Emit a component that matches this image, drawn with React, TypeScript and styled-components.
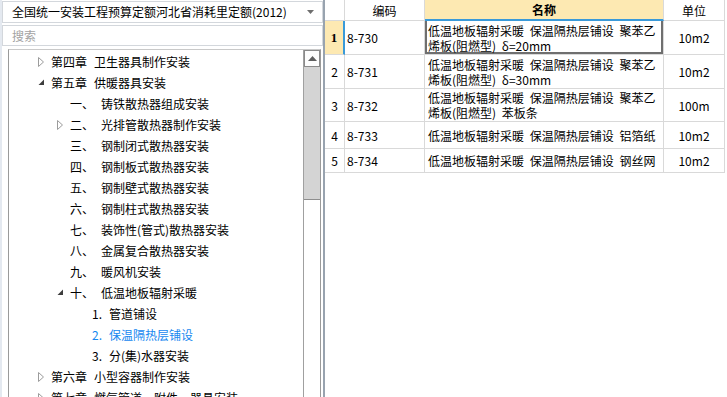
import styled, { createGlobalStyle } from "styled-components";

const GlobalStyle = createGlobalStyle`
  html, body {
    margin: 0;
    padding: 0;
    background: #fff;
    overflow: hidden;
  }
  body {
    font-family: "Noto Sans CJK SC", "Liberation Sans", sans-serif;
    font-size: 12px;
    color: #000;
  }
  * {
    box-sizing: border-box;
  }
`;

const Window = styled.div`
  display: flex;
  width: 727px;
  height: 397px;
  overflow: hidden;
  background: #fff;
`;

const LeftPane = styled.div`
  width: 323px;
  flex-shrink: 0;
  display: flex;
  flex-direction: column;
  padding: 1px 0 0 0;
  border-left: 2px solid #e4e9f0;
  overflow: hidden;
`;

const Combo = styled.div`
  height: 22px;
  flex-shrink: 0;
  display: flex;
  align-items: center;
  justify-content: space-between;
  padding: 0 8px 0 9px;
  border: 1px solid #d3d7dc;
  background: #fff;
  white-space: nowrap;
  line-height: 20px;
`;

const SearchBox = styled.div`
  height: 21px;
  flex-shrink: 0;
  margin-top: 2px;
  display: flex;
  align-items: center;
  padding-left: 9px;
  border: 1px solid #d3d7dc;
  color: #a3a3a3;
  background: #fff;
`;

const TreeBox = styled.div`
  height: 360px;
  flex-shrink: 0;
  margin: 3px 2px 0 6px;
  display: flex;
  border: 1px solid #9a9a9a;
  border-bottom: none;
  border-top-color: #c9c9c9;
  background: #fff;
`;

const TreeList = styled.div`
  flex: 1;
  padding-top: 1px;
  overflow: hidden;
`;

const TreeRow = styled.div<{ $pad: number; $selected?: boolean }>`
  height: 21px;
  display: flex;
  align-items: center;
  padding-left: ${(p) => p.$pad}px;
  white-space: nowrap;
  line-height: 21px;
  color: ${(p) => (p.$selected ? "#1688f0" : "#000")};
`;

const ToggleSlot = styled.span`
  width: 13px;
  flex-shrink: 0;
  display: flex;
  align-items: center;
`;

const Tag = styled.span<{ $w: number }>`
  width: ${(p) => p.$w}px;
  flex-shrink: 0;
`;

const ScrollBar = styled.div`
  width: 17px;
  flex-shrink: 0;
  display: flex;
  flex-direction: column;
  border-left: 1px solid #a0a0a0;
  background: #fff;
`;

const UpButton = styled.div`
  height: 17px;
  display: flex;
  align-items: center;
  justify-content: center;
  border: 1px solid #8a8a8a;
  background: #fdfdfd;
`;

const Thumb = styled.div`
  height: 133px;
  background: #d4d4d4;
  border-bottom: 1px solid #8e8e8e;
`;

const RightPane = styled.div`
  flex: 1;
  border-left: 2px solid #98a3af;
  background: #fff;
`;

const GridRow = styled.div<{ $h: number }>`
  display: grid;
  grid-template-columns: 20px 80px 239px 61px;
  width: 400px;
  height: ${(p) => p.$h}px;
`;

const Cell = styled.div<{ $align?: "left" | "center" }>`
  display: flex;
  align-items: center;
  justify-content: ${(p) => (p.$align === "left" ? "flex-start" : "center")};
  padding: 0 2px;
  border-right: 1px solid #d9d9d9;
  border-bottom: 1px solid #d9d9d9;
  white-space: nowrap;
  overflow: hidden;
`;

const HeadCell = styled(Cell)<{ $active?: boolean }>`
  background: ${(p) => (p.$active ? "#fde9b2" : "#fff")};
  font-weight: ${(p) => (p.$active ? 700 : 400)};
  border-bottom: ${(p) => (p.$active ? "2px solid #3a9ad9" : "1px solid #d9d9d9")};
`;

const NumCell = styled(Cell)<{ $active?: boolean }>`
  background: ${(p) => (p.$active ? "#fde9b2" : "#fff")};
  font-family: ${(p) => (p.$active ? '"Liberation Serif", serif' : "inherit")};
  font-weight: ${(p) => (p.$active ? 700 : 400)};
  font-size: ${(p) => (p.$active ? "13px" : "12px")};
  border-right: ${(p) => (p.$active ? "2px solid #3a9ad9" : "1px solid #d9d9d9")};
`;

const NameCell = styled(Cell)<{ $active?: boolean }>`
  justify-content: flex-start;
  padding-left: 3px;
  box-shadow: ${(p) =>
    p.$active ? "inset 2px 0 #6f6f6f, inset -2px 0 #6f6f6f, inset 0 -2px #6f6f6f" : "none"};
`;

const NameText = styled.span`
  display: block;
  width: 100%;
  white-space: normal;
  line-height: 15px;
  word-spacing: 3px;
`;

type Toggle = "none" | "closed" | "open";

interface TreeNode {
  level: 1 | 2 | 3;
  toggle: Toggle;
  tag: string;
  title: string;
  selected?: boolean;
}

const treeNodes: TreeNode[] = [
  { level: 1, toggle: "closed", tag: "第四章", title: "卫生器具制作安装" },
  { level: 1, toggle: "open", tag: "第五章", title: "供暖器具安装" },
  { level: 2, toggle: "none", tag: "一、", title: "铸铁散热器组成安装" },
  { level: 2, toggle: "closed", tag: "二、", title: "光排管散热器制作安装" },
  { level: 2, toggle: "none", tag: "三、", title: "钢制闭式散热器安装" },
  { level: 2, toggle: "none", tag: "四、", title: "钢制板式散热器安装" },
  { level: 2, toggle: "none", tag: "五、", title: "钢制壁式散热器安装" },
  { level: 2, toggle: "none", tag: "六、", title: "钢制柱式散热器安装" },
  { level: 2, toggle: "none", tag: "七、", title: "装饰性(管式)散热器安装" },
  { level: 2, toggle: "none", tag: "八、", title: "金属复合散热器安装" },
  { level: 2, toggle: "none", tag: "九、", title: "暖风机安装" },
  { level: 2, toggle: "open", tag: "十、", title: "低温地板辐射采暖" },
  { level: 3, toggle: "none", tag: "1.", title: "管道铺设" },
  { level: 3, toggle: "none", tag: "2.", title: "保温隔热层铺设", selected: true },
  { level: 3, toggle: "none", tag: "3.", title: "分(集)水器安装" },
  { level: 1, toggle: "closed", tag: "第六章", title: "小型容器制作安装" },
  { level: 1, toggle: "closed", tag: "第七章", title: "燃气管道、附件、器具安装" },
];

const levelPad = { 1: 29, 2: 48, 3: 70 };
const levelTag = { 1: 43, 2: 31, 3: 17 };

interface Quota {
  no: number;
  code: string;
  name: string;
  unit: string;
  h: number;
}

const quotas: Quota[] = [
  { no: 1, code: "8-730", name: "低温地板辐射采暖 保温隔热层铺设 聚苯乙烯板(阻燃型) δ=20mm", unit: "10m2", h: 34 },
  { no: 2, code: "8-731", name: "低温地板辐射采暖 保温隔热层铺设 聚苯乙烯板(阻燃型) δ=30mm", unit: "10m2", h: 34 },
  { no: 3, code: "8-732", name: "低温地板辐射采暖 保温隔热层铺设 聚苯乙烯板(阻燃型) 苯板条", unit: "100m", h: 33 },
  { no: 4, code: "8-733", name: "低温地板辐射采暖 保温隔热层铺设 铝箔纸", unit: "10m2", h: 27 },
  { no: 5, code: "8-734", name: "低温地板辐射采暖 保温隔热层铺设 钢丝网", unit: "10m2", h: 24 },
];

function ToggleIcon({ kind }: { kind: Toggle }) {
  if (kind === "closed") {
    return (
      <svg width="7" height="10" viewBox="0 0 7 10">
        <polygon points="0.5,0.5 5.5,5 0.5,9.5" fill="#fff" stroke="#9c9c9c" strokeWidth="1" />
      </svg>
    );
  }
  if (kind === "open") {
    return (
      <svg width="7" height="7" viewBox="0 0 7 7">
        <polygon points="6,0.5 6,6 0.5,6" fill="#3d3d3d" />
      </svg>
    );
  }
  return null;
}

function App() {
  const selectedRow = 1;
  return (
    <>
      <GlobalStyle />
      <Window>
        <LeftPane>
          <Combo>
            <span>全国统一安装工程预算定额河北省消耗里定额(2012)</span>
            <svg width="7" height="4" viewBox="0 0 7 4">
              <polygon points="0,0 7,0 3.5,4" fill="#6e6e6e" />
            </svg>
          </Combo>
          <SearchBox>搜索</SearchBox>
          <TreeBox>
            <TreeList>
              {treeNodes.map((n) => (
                <TreeRow key={n.tag + n.title} $pad={levelPad[n.level]} $selected={n.selected}>
                  <ToggleSlot>
                    <ToggleIcon kind={n.toggle} />
                  </ToggleSlot>
                  <Tag $w={levelTag[n.level]}>{n.tag}</Tag>
                  <span>{n.title}</span>
                </TreeRow>
              ))}
            </TreeList>
            <ScrollBar>
              <UpButton>
                <svg width="9" height="5" viewBox="0 0 9 5">
                  <polygon points="0,5 9,5 4.5,0" fill="#5f5f5f" />
                </svg>
              </UpButton>
              <Thumb />
            </ScrollBar>
          </TreeBox>
        </LeftPane>
        <RightPane>
          <GridRow $h={21}>
            <HeadCell />
            <HeadCell>编码</HeadCell>
            <HeadCell $active>名称</HeadCell>
            <HeadCell>单位</HeadCell>
          </GridRow>
          {quotas.map((q) => (
            <GridRow key={q.code} $h={q.h}>
              <NumCell $active={q.no === selectedRow}>{q.no}</NumCell>
              <Cell $align="left">{q.code}</Cell>
              <NameCell $active={q.no === selectedRow}>
                <NameText>{q.name}</NameText>
              </NameCell>
              <Cell>{q.unit}</Cell>
            </GridRow>
          ))}
        </RightPane>
      </Window>
    </>
  );
}

export default App;
